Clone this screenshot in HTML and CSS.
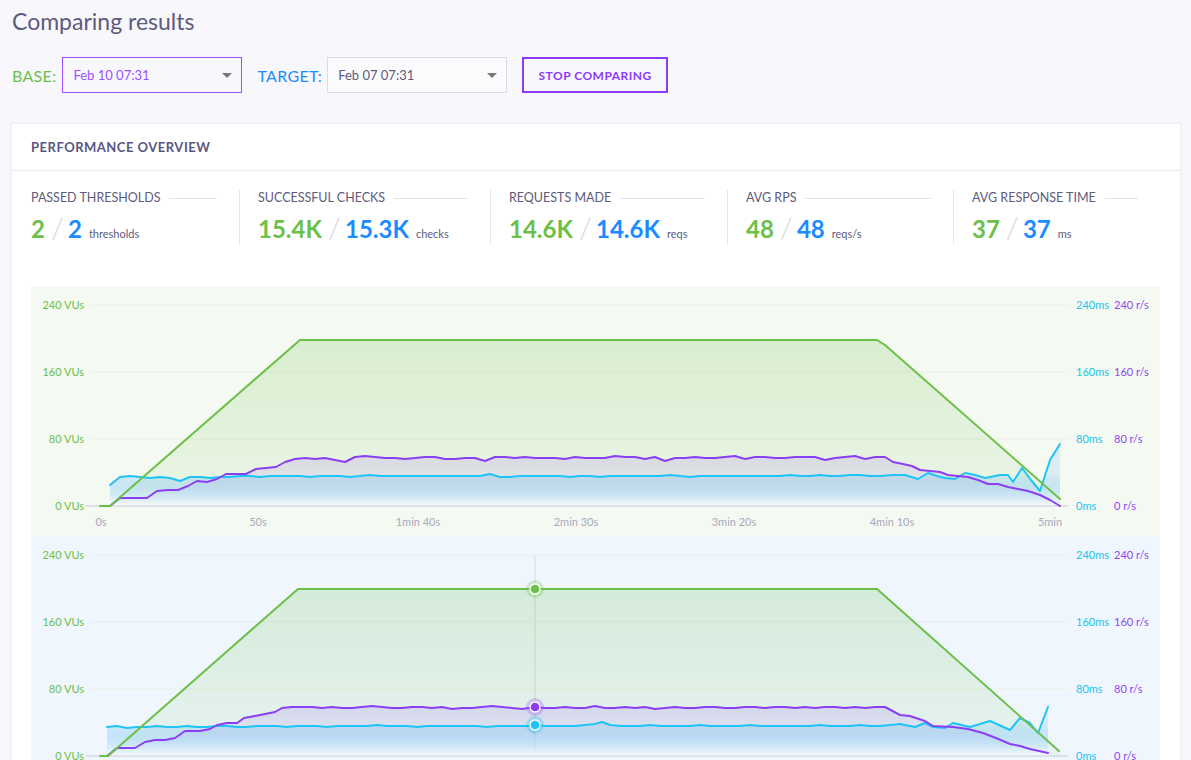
FILE: index.html
```html
<!DOCTYPE html>
<html>
<head>
<meta charset="utf-8">
<link rel="stylesheet" href="styles.css">
</head>
<body>
<div class="page">
  <h1 class="title">Comparing results</h1>
  <div class="controls">
    <span class="lbl lbl-base">BASE:</span>
    <div class="select select-base"><span>Feb 10 07:31</span><span class="caret"></span></div>
    <span class="lbl lbl-target">TARGET:</span>
    <div class="select select-target"><span>Feb 07 07:31</span><span class="caret"></span></div>
    <button class="btn">STOP COMPARING</button>
  </div>

  <section class="card">
    <header class="card-head">PERFORMANCE OVERVIEW</header>
    <div class="card-body">
      <div class="stats">
        <div class="stat">
          <div class="stat-label"><span>PASSED THRESHOLDS</span><i class="rule"></i></div>
          <div class="stat-val"><b class="v-base">2</b><span class="slash">/</span><b class="v-target">2</b><span class="unit">thresholds</span></div>
        </div>
        <div class="stat">
          <div class="stat-label"><span>SUCCESSFUL CHECKS</span><i class="rule"></i></div>
          <div class="stat-val"><b class="v-base">15.4K</b><span class="slash">/</span><b class="v-target">15.3K</b><span class="unit">checks</span></div>
        </div>
        <div class="stat">
          <div class="stat-label"><span>REQUESTS MADE</span><i class="rule"></i></div>
          <div class="stat-val"><b class="v-base">14.6K</b><span class="slash">/</span><b class="v-target">14.6K</b><span class="unit">reqs</span></div>
        </div>
        <div class="stat">
          <div class="stat-label"><span>AVG RPS</span><i class="rule"></i></div>
          <div class="stat-val"><b class="v-base">48</b><span class="slash">/</span><b class="v-target">48</b><span class="unit">reqs/s</span></div>
        </div>
        <div class="stat">
          <div class="stat-label"><span>AVG RESPONSE TIME</span><i class="rule"></i></div>
          <div class="stat-val"><b class="v-base">37</b><span class="slash">/</span><b class="v-target">37</b><span class="unit">ms</span></div>
        </div>
      </div>

      <div class="chart chart-base">
        <svg width="1129" height="250" viewBox="31 286 1129 250">
          <defs>
            <linearGradient id="gGreen" gradientUnits="userSpaceOnUse" x1="0" y1="340" x2="0" y2="506">
              <stop offset="0" stop-color="#6cc04a" stop-opacity="0.2"/>
              <stop offset="1" stop-color="#6cc04a" stop-opacity="0.06"/>
            </linearGradient>
            <linearGradient id="gPurple" gradientUnits="userSpaceOnUse" x1="0" y1="456" x2="0" y2="506">
              <stop offset="0" stop-color="#8c45f0" stop-opacity="0.15"/>
              <stop offset="1" stop-color="#8c45f0" stop-opacity="0.03"/>
            </linearGradient>
            <linearGradient id="gCyan" gradientUnits="userSpaceOnUse" x1="0" y1="474" x2="0" y2="506">
              <stop offset="0" stop-color="#3aa6f2" stop-opacity="0.14"/>
              <stop offset="1" stop-color="#ffffff" stop-opacity="0.8"/>
            </linearGradient>
          </defs>
          <line class="grid" x1="91" x2="1068" y1="305" y2="305"/>
          <line class="grid" x1="91" x2="1068" y1="372" y2="372"/>
          <line class="grid" x1="91" x2="1068" y1="439" y2="439"/>

          <polygon fill="url(#gGreen)" points="100,506 110,506 300,340 877,340 885,345 1060,499 1060,506"/>
          <polygon fill="url(#gPurple)" points="110,506 120,498 135,498 147,498 157,491 168,490 178,490 188,486 197,481 207,482 217,479 226,474 236,474 246,474 256,469 266,468 276,467 285,462 295,459 305,458 315,459 325,458 335,460 345,462 355,457 365,456 375,457 385,458 395,458 405,459 415,458 425,457 435,457 445,459 455,459 465,458 475,458 485,461 495,457 505,457 515,458 525,457 535,458 545,458 555,458 565,459 575,457 585,458 595,458 605,458 615,456 625,457 635,457 645,459 655,457 665,461 675,458 685,458 695,457 705,458 715,458 725,457 735,456 745,459 755,457 765,457 775,458 785,458 795,457 805,457 815,457 825,460 835,458 845,457 855,456 865,459 875,457 885,457 893,462 903,464 912,466 920,470 930,471 940,472 948,475 958,476 968,477 978,480 988,484 998,484 1008,487 1018,489 1028,491 1040,495 1050,500 1060,506"/>
          <polygon fill="url(#gCyan)" points="110,506 110,485 120,477 130,476 140,477 150,478 160,477 170,478 180,481 190,477 200,477 210,478 220,477 230,477 240,476 250,476 260,477 270,476 280,476 290,476 300,476 310,477 320,476 330,476 340,476 350,477 360,476 370,475 380,476 390,476 400,476 410,476 420,476 430,476 440,476 450,476 460,476 470,476 480,476 490,474 500,477 510,477 520,476 530,476 540,476 550,476 560,476 570,477 580,476 590,476 600,477 610,476 620,476 630,476 640,476 650,476 660,476 670,475 680,476 690,477 700,476 710,476 720,476 730,476 740,476 750,476 760,476 770,476 780,476 790,475 800,476 810,476 820,475 830,476 840,476 850,475 860,475 870,476 880,476 893,475 905,475 918,479 928,473 937,476 945,478 955,479 965,473 975,475 985,478 1000,475 1008,475 1013,482 1022,468 1031,480 1040,491 1050,460 1060,444 1060,506"/>

          <line class="base" x1="86" x2="1068" y1="506" y2="506"/>

          <polyline class="ln ln-cyan" points="110,485 120,477 130,476 140,477 150,478 160,477 170,478 180,481 190,477 200,477 210,478 220,477 230,477 240,476 250,476 260,477 270,476 280,476 290,476 300,476 310,477 320,476 330,476 340,476 350,477 360,476 370,475 380,476 390,476 400,476 410,476 420,476 430,476 440,476 450,476 460,476 470,476 480,476 490,474 500,477 510,477 520,476 530,476 540,476 550,476 560,476 570,477 580,476 590,476 600,477 610,476 620,476 630,476 640,476 650,476 660,476 670,475 680,476 690,477 700,476 710,476 720,476 730,476 740,476 750,476 760,476 770,476 780,476 790,475 800,476 810,476 820,475 830,476 840,476 850,475 860,475 870,476 880,476 893,475 905,475 918,479 928,473 937,476 945,478 955,479 965,473 975,475 985,478 1000,475 1008,475 1013,482 1022,468 1031,480 1040,491 1050,460 1060,444"/>
          <polyline class="ln ln-purple" points="110,506 120,498 135,498 147,498 157,491 168,490 178,490 188,486 197,481 207,482 217,479 226,474 236,474 246,474 256,469 266,468 276,467 285,462 295,459 305,458 315,459 325,458 335,460 345,462 355,457 365,456 375,457 385,458 395,458 405,459 415,458 425,457 435,457 445,459 455,459 465,458 475,458 485,461 495,457 505,457 515,458 525,457 535,458 545,458 555,458 565,459 575,457 585,458 595,458 605,458 615,456 625,457 635,457 645,459 655,457 665,461 675,458 685,458 695,457 705,458 715,458 725,457 735,456 745,459 755,457 765,457 775,458 785,458 795,457 805,457 815,457 825,460 835,458 845,457 855,456 865,459 875,457 885,457 893,462 903,464 912,466 920,470 930,471 940,472 948,475 958,476 968,477 978,480 988,484 998,484 1008,487 1018,489 1028,491 1040,495 1050,500 1060,506"/>
          <polyline class="ln ln-green" points="100,506 110,506 300,340 877,340 885,345 1060,499"/>

          <text class="ax ax-vu" x="84" y="309">240 VUs</text>
          <text class="ax ax-vu" x="84" y="376">160 VUs</text>
          <text class="ax ax-vu" x="84" y="443">80 VUs</text>
          <text class="ax ax-vu" x="84" y="510">0 VUs</text>
          <text class="ax ax-ms" x="1076" y="309">240ms</text>
          <text class="ax ax-ms" x="1076" y="376">160ms</text>
          <text class="ax ax-ms" x="1076" y="443">80ms</text>
          <text class="ax ax-ms" x="1076" y="510">0ms</text>
          <text class="ax ax-rs" x="1114" y="309">240 r/s</text>
          <text class="ax ax-rs" x="1114" y="376">160 r/s</text>
          <text class="ax ax-rs" x="1114" y="443">80 r/s</text>
          <text class="ax ax-rs" x="1114" y="510">0 r/s</text>
          <text class="ax ax-x" x="101" y="526">0s</text>
          <text class="ax ax-x" x="258" y="526">50s</text>
          <text class="ax ax-x" x="418" y="526">1min 40s</text>
          <text class="ax ax-x" x="576" y="526">2min 30s</text>
          <text class="ax ax-x" x="734" y="526">3min 20s</text>
          <text class="ax ax-x" x="892" y="526">4min 10s</text>
          <text class="ax ax-x" x="1050" y="526">5min</text>
        </svg>
      </div>

      <div class="chart chart-target">
        <svg width="1129" height="250" viewBox="31 286 1129 250">
          <line class="grid" x1="91" x2="1068" y1="305" y2="305"/>
          <line class="grid" x1="91" x2="1068" y1="372" y2="372"/>
          <line class="grid grid-warm" x1="91" x2="1068" y1="439" y2="439"/>
          <line class="cross" x1="535" x2="535" y1="306" y2="506"/>

          <polygon fill="url(#gGreen)" points="100,506 108,506 298,339 877,339 1059,501 1059,506"/>
          <polygon fill="url(#gPurple)" points="107,506 117,498 135,498 145,492 155,490 165,490 175,488 185,481 200,481 210,479 217,475 227,473 237,473 244,468 255,466 265,464 275,462 282,458 292,457 302,457 312,457 322,458 332,457 342,458 352,458 362,457 372,456 382,457 392,458 402,458 412,457 422,457 432,458 442,457 452,459 462,458 472,458 482,457 492,456 502,457 512,458 522,459 535,457 545,458 555,458 565,457 575,458 585,458 595,456 605,458 615,458 625,457 635,458 645,457 655,459 665,458 675,457 685,458 695,458 705,457 715,457 725,458 735,458 745,457 755,457 765,458 775,457 785,457 795,458 805,457 815,458 825,457 835,457 845,458 855,457 865,458 875,457 885,457 900,465 910,466 925,471 933,476 953,477 968,479 983,483 996,488 1010,494 1020,496 1030,499 1048,503 1048,506"/>
          <polygon fill="url(#gCyan)" points="107,506 107,477 117,476 127,478 137,477 147,477 157,476 167,477 177,477 187,476 197,477 207,477 217,476 227,476 237,477 247,477 257,476 267,476 277,476 287,477 297,476 307,476 317,476 327,477 337,476 347,476 357,476 367,476 377,475 387,476 397,476 407,476 417,477 427,476 437,476 447,476 457,476 467,476 477,476 487,477 497,476 507,476 517,476 527,476 535,475 545,476 555,476 565,476 575,476 585,475 595,474 602,472 610,475 620,476 630,476 640,476 650,475 660,476 670,476 680,476 690,476 700,475 710,476 720,476 730,476 740,476 750,475 760,476 770,476 780,476 790,476 800,476 810,476 820,475 830,476 840,476 850,476 860,475 870,476 880,476 890,475 900,474 915,477 925,473 933,477 945,478 953,473 970,477 990,471 1010,480 1020,468 1030,473 1038,483 1048,457 1048,506"/>

          <line class="base" x1="86" x2="1068" y1="506" y2="506"/>

          <polyline class="ln ln-cyan" points="107,477 117,476 127,478 137,477 147,477 157,476 167,477 177,477 187,476 197,477 207,477 217,476 227,476 237,477 247,477 257,476 267,476 277,476 287,477 297,476 307,476 317,476 327,477 337,476 347,476 357,476 367,476 377,475 387,476 397,476 407,476 417,477 427,476 437,476 447,476 457,476 467,476 477,476 487,477 497,476 507,476 517,476 527,476 535,475 545,476 555,476 565,476 575,476 585,475 595,474 602,472 610,475 620,476 630,476 640,476 650,475 660,476 670,476 680,476 690,476 700,475 710,476 720,476 730,476 740,476 750,475 760,476 770,476 780,476 790,476 800,476 810,476 820,475 830,476 840,476 850,476 860,475 870,476 880,476 890,475 900,474 915,477 925,473 933,477 945,478 953,473 970,477 990,471 1010,480 1020,468 1030,473 1038,483 1048,457"/>
          <polyline class="ln ln-purple" points="107,506 117,498 135,498 145,492 155,490 165,490 175,488 185,481 200,481 210,479 217,475 227,473 237,473 244,468 255,466 265,464 275,462 282,458 292,457 302,457 312,457 322,458 332,457 342,458 352,458 362,457 372,456 382,457 392,458 402,458 412,457 422,457 432,458 442,457 452,459 462,458 472,458 482,457 492,456 502,457 512,458 522,459 535,457 545,458 555,458 565,457 575,458 585,458 595,456 605,458 615,458 625,457 635,458 645,457 655,459 665,458 675,457 685,458 695,458 705,457 715,457 725,458 735,458 745,457 755,457 765,458 775,457 785,457 795,458 805,457 815,458 825,457 835,457 845,458 855,457 865,458 875,457 885,457 900,465 910,466 925,471 933,476 953,477 968,479 983,483 996,488 1010,494 1020,496 1030,499 1048,503"/>
          <polyline class="ln ln-green" points="100,506 108,506 298,339 877,339 1059,501"/>

          <circle class="halo halo-green" cx="535" cy="339" r="9"/>
          <circle class="dot dot-green" cx="535" cy="339" r="5"/>
          <circle class="halo halo-purple" cx="535" cy="457" r="9"/>
          <circle class="dot dot-purple" cx="535" cy="457" r="5"/>
          <circle class="halo halo-cyan" cx="535" cy="475" r="9"/>
          <circle class="dot dot-cyan" cx="535" cy="475" r="5"/>

          <text class="ax ax-vu" x="84" y="309">240 VUs</text>
          <text class="ax ax-vu" x="84" y="376">160 VUs</text>
          <text class="ax ax-vu" x="84" y="443">80 VUs</text>
          <text class="ax ax-vu" x="84" y="510">0 VUs</text>
          <text class="ax ax-ms" x="1076" y="309">240ms</text>
          <text class="ax ax-ms" x="1076" y="376">160ms</text>
          <text class="ax ax-ms" x="1076" y="443">80ms</text>
          <text class="ax ax-ms" x="1076" y="510">0ms</text>
          <text class="ax ax-rs" x="1114" y="309">240 r/s</text>
          <text class="ax ax-rs" x="1114" y="376">160 r/s</text>
          <text class="ax ax-rs" x="1114" y="443">80 r/s</text>
          <text class="ax ax-rs" x="1114" y="510">0 r/s</text>
        </svg>
      </div>
    </div>
  </section>
</div>
</body>
</html>
```

FILE: styles.css
```css
* { box-sizing: border-box; }

body {
  margin: 0;
  background: #f8f7fc;
  font-family: "Lato", "Open Sans", sans-serif;
  color: #5d5b80;
}

.page {
  padding: 8px 10px 0 11px;
}

.title {
  margin: 0;
  padding-left: 1px;
  font-size: 23px;
  line-height: 26px;
  font-weight: 400;
  color: #5d5b80;
}

.controls {
  display: flex;
  align-items: center;
  margin-top: 23px;
  padding-left: 1px;
}

.lbl {
  font-size: 16px;
  letter-spacing: 0.3px;
}
.lbl-base { color: #6cc04a; margin-right: 6px; }
.lbl-target { color: #1a8cff; margin-left: 15px; margin-right: 5px; }

.select {
  width: 180px;
  height: 36px;
  display: flex;
  align-items: center;
  justify-content: space-between;
  padding: 0 9px 0 10px;
  font-size: 13px;
  border: 1px solid #dcdbe3;
  background: #fbfbfd;
  color: #5d5b7c;
}
.select-base {
  border-color: #9b51ff;
  color: #9b51ff;
  background: transparent;
}

.caret {
  width: 0;
  height: 0;
  border-left: 5px solid transparent;
  border-right: 5px solid transparent;
  border-top: 5px solid #777;
}

.btn {
  margin-left: 15px;
  width: 146px;
  height: 36px;
  border: 2px solid #8c3cf5;
  background: transparent;
  color: #8c3cf5;
  font-family: "Lato", sans-serif;
  font-weight: 700;
  font-size: 12px;
  letter-spacing: 0.5px;
  padding: 0;
}

.card {
  margin-top: 30px;
  background: #fff;
  border: 1px solid #efeef4;
  box-shadow: 0 1px 3px rgba(60, 50, 110, 0.06);
}

.card-head {
  height: 47px;
  display: flex;
  align-items: center;
  padding: 0 19px;
  border-bottom: 1px solid #ececf1;
  font-size: 13px;
  font-weight: 700;
  letter-spacing: 0.5px;
  color: #5a5682;
}

.card-body {
  padding: 19px 20px 0 19px;
}

.stats {
  display: grid;
  grid-template-columns: 208px 251px 237px 226px 1fr;
}

.stat {
  padding-right: 22px;
  height: 54px;
}
.stat + .stat {
  border-left: 1px solid #e6e6ea;
  padding-left: 18px;
}

.stat-label {
  display: flex;
  align-items: center;
  font-size: 12.5px;
  line-height: 16px;
  color: #5d5b7c;
}
.rule {
  flex: 1;
  height: 1px;
  margin-left: 9px;
  background: #e4e4e8;
}

.stat-val {
  display: flex;
  align-items: baseline;
  margin-top: 6px;
  line-height: 28px;
}
.stat-val b {
  font-size: 24px;
  font-weight: 700;
}
.v-base { color: #6cc04a; }
.v-target { color: #1a8cff; }
.slash {
  font-size: 30px;
  color: #d8d8de;
  margin: 0 4px 0 6px;
  font-weight: 300;
}
.unit {
  font-size: 11px;
  color: #5d5b7c;
  margin-left: 7px;
}

.chart {
  width: 1129px;
  height: 250px;
}
.chart svg { display: block; }
.chart-base {
  margin-top: 42px;
  background: #f4f9f1;
}
.chart-target {
  background: #eff6fd;
}

.grid { stroke: #000; stroke-opacity: 0.04; stroke-width: 1; }
.grid-warm { stroke: #e8d870; stroke-opacity: 0.18; }
.base { stroke: #c9c9de; stroke-width: 1; }
.cross { stroke: #d8dadf; stroke-width: 1; }

.ln { fill: none; stroke-width: 2; stroke-linejoin: round; stroke-linecap: round; }
.ln-green { stroke: #6cc04a; }
.ln-purple { stroke: #8b3ff5; }
.ln-cyan { stroke: #1ec4f7; }

.halo { stroke: none; }
.halo-green { fill: #6cc04a; fill-opacity: 0.25; }
.halo-purple { fill: #8b3ff5; fill-opacity: 0.25; }
.halo-cyan { fill: #1ec4f7; fill-opacity: 0.3; }
.dot { stroke: #fff; stroke-width: 1.3; }
.dot-green { fill: #6cc04a; }
.dot-purple { fill: #8b3ff5; }
.dot-cyan { fill: #1ec4f7; }

.ax {
  font-family: "Lato", sans-serif;
  font-size: 11px;
}
.ax-vu { fill: #6cc04a; text-anchor: end; }
.ax-ms { fill: #22c3f0; }
.ax-rs { fill: #9345f2; }
.ax-x { fill: #a9a9bd; text-anchor: middle; }
```
